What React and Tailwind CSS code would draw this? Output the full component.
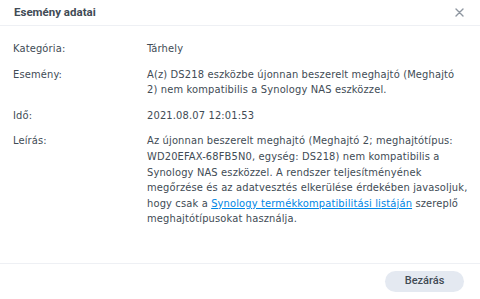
export default function App() {
  const rows = [
    { label: 'Kategória:', lines: ['Tárhely'] },
    {
      label: 'Esemény:',
      lines: ['A(z) DS218 eszközbe újonnan beszerelt meghajtó (Meghajtó', '2) nem kompatibilis a Synology NAS eszközzel.'],
    },
    { label: 'Idő:', lines: ['2021.08.07 12:01:53'] },
  ];

  return (
    <div className="w-[480px] h-[299px] bg-white flex flex-col text-[#414b55]" style={{ fontFamily: '"DejaVu Sans Condensed", "DejaVu Sans", Verdana, sans-serif' }}>
      {/* Header */}
      <div className="h-[26px] flex items-center justify-between pl-[14px] pr-[16px] border-b border-[#eef0f4] shrink-0">
        <h1 className="text-[11.5px] font-bold text-[#414b55]" style={{ fontFamily: 'Roboto, "Liberation Sans", sans-serif' }}>Esemény adatai</h1>
        <svg width="9" height="9" viewBox="0 0 9 9" className="text-[#8e96a0]">
          <path d="M1 1 L8 8 M8 1 L1 8" stroke="currentColor" strokeWidth="1.4" strokeLinecap="round" />
        </svg>
      </div>

      {/* Body */}
      <div className="flex-1 pt-[15px] pl-[13px] text-[11px] leading-[15.6px] tracking-[0.15px] flex flex-col gap-[10px] whitespace-nowrap">
        {rows.map((r) => (
          <div key={r.label} className="flex">
            <div className="w-[134px] shrink-0">{r.label}</div>
            <div className="flex-1 flex flex-col">
              {r.lines.map((l) => (
                <span key={l}>{l}</span>
              ))}
            </div>
          </div>
        ))}
        <div className="flex">
          <div className="w-[134px] shrink-0">Leírás:</div>
          <div className="flex-1 flex flex-col">
            <span>Az újonnan beszerelt meghajtó (Meghajtó 2; meghajtótípus:</span>
            <span>WD20EFAX-68FB5N0, egység: DS218) nem kompatibilis a</span>
            <span>Synology NAS eszközzel. A rendszer teljesítményének</span>
            <span>megőrzése és az adatvesztés elkerülése érdekében javasoljuk,</span>
            <span>
              hogy csak a <a href="#" className="text-[#0086e5] underline">Synology termékkompatibilitási listáján</a> szereplő
            </span>
            <span>meghajtótípusokat használja.</span>
          </div>
        </div>
      </div>

      {/* Footer */}
      <div className="h-[36px] border-t border-[#eef0f4] flex items-center justify-end pr-[16px] shrink-0">
        <button className="w-[79px] h-[21px] rounded-full bg-[#e4e9f1] text-[11px] text-[#414b55] font-medium" style={{ fontFamily: 'Roboto, "Liberation Sans", sans-serif' }}>
          Bezárás
        </button>
      </div>
    </div>
  );
}
